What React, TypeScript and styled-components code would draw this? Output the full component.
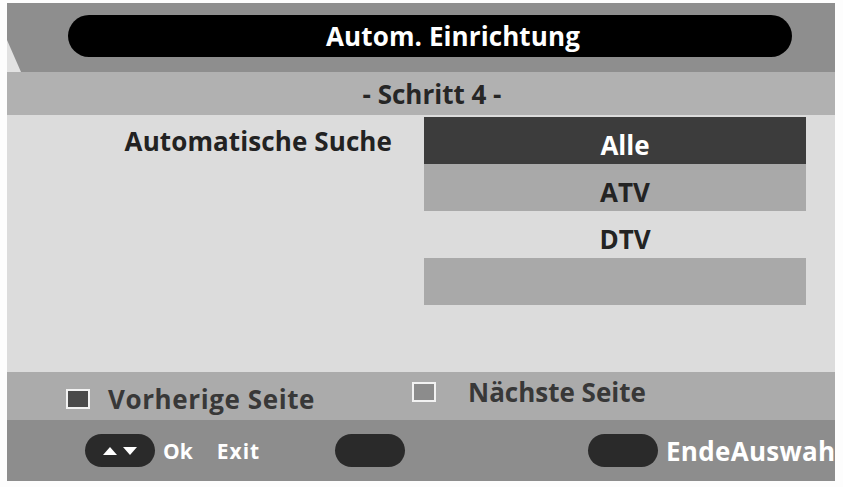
import React from "react";
import styled, { createGlobalStyle } from "styled-components";

const Global = createGlobalStyle`
  html, body { margin: 0; padding: 0; background: #ffffff; }
  body { font-family: "Open Sans", Lato, sans-serif; }
`;

const Screen = styled.div`
  width: 843px;
  height: 487px;
  box-sizing: border-box;
  padding: 3px 8px 6px 7px;
  background: #fdfdfd;
  overflow: hidden;
`;

const Frame = styled.div`
  display: flex;
  flex-direction: column;
  width: 828px;
  height: 478px;
  overflow: hidden;
`;

const TitleBar = styled.div`
  position: relative;
  height: 69px;
  box-sizing: border-box;
  padding: 12px 43px 15px 61px;
  background: #8e8e8e;
  &::before {
    content: "";
    position: absolute;
    left: 0;
    bottom: 0;
    width: 14px;
    height: 32px;
    background: #e2e2e2;
    clip-path: polygon(0 0, 100% 100%, 0 100%);
  }
`;

const TitlePill = styled.div`
  height: 42px;
  border-radius: 21px;
  background: #000000;
  display: flex;
  align-items: center;
  justify-content: center;
  padding-left: 46px;
  color: #ffffff;
  font-weight: 700;
  font-size: 26px;
  letter-spacing: 0.1px;
`;

const StepBar = styled.div`
  height: 43px;
  box-sizing: border-box;
  padding-left: 22px;
  background: #b1b1b1;
  display: flex;
  align-items: center;
  justify-content: center;
  color: #262626;
  font-weight: 700;
  font-size: 26px;
  letter-spacing: 0;
`;

const Content = styled.div`
  height: 257px;
  box-sizing: border-box;
  padding: 2px 29px 0 0;
  background: #dcdcdc;
  display: grid;
  grid-template-columns: 1fr 382px;
  column-gap: 32px;
  align-items: start;
`;

const Label = styled.div`
  height: 47px;
  display: flex;
  align-items: center;
  justify-content: flex-end;
  color: #222222;
  font-weight: 700;
  font-size: 26px;
  letter-spacing: 0.1px;
`;

const List = styled.div`
  display: flex;
  flex-direction: column;
`;

const Option = styled.div<{ $tone: "active" | "grey" | "plain" }>`
  height: 47px;
  box-sizing: border-box;
  padding: 8px 0 0 20px;
  display: flex;
  align-items: center;
  justify-content: center;
  font-weight: 700;
  font-size: 26px;
  letter-spacing: 0;
  background: ${(p) =>
    p.$tone === "active" ? "#3c3c3c" : p.$tone === "grey" ? "#a9a9a9" : "transparent"};
  color: ${(p) => (p.$tone === "active" ? "#ffffff" : "#232323")};
`;

const PageBar = styled.div`
  height: 48px;
  background: #ababab;
  display: flex;
  align-items: center;
  padding-left: 59px;
`;

const PageItem = styled.div<{ $width: number; $lift: number; $gap: number; $track: number }>`
  width: ${(p) => p.$width}px;
  display: flex;
  align-items: center;
  gap: ${(p) => p.$gap}px;
  transform: translateY(${(p) => -p.$lift}px);
  color: #383838;
  font-weight: 700;
  font-size: 26px;
  letter-spacing: ${(p) => p.$track}px;
  white-space: nowrap;
`;

const ColorKey = styled.span<{ $fill: string }>`
  width: 20px;
  height: 16px;
  box-sizing: content-box;
  border: 2px solid #f2f2f2;
  background: ${(p) => p.$fill};
  flex: none;
`;

const KeyBar = styled.div`
  height: 61px;
  background: #8d8d8d;
  display: flex;
  align-items: center;
  padding-left: 78px;
  color: #ffffff;
  overflow: hidden;
`;

const KeyGroup = styled.div<{ $width: number }>`
  width: ${(p) => p.$width}px;
  flex: none;
  display: flex;
  align-items: center;
`;

const KeyPill = styled.div<{ $after: number }>`
  width: 70px;
  height: 33px;
  border-radius: 17px;
  background: #2a2a2a;
  display: flex;
  align-items: center;
  justify-content: center;
  gap: 6px;
  margin-right: ${(p) => p.$after}px;
  flex: none;
`;

const KeyText = styled.span<{ $size: number; $after: number; $track: number }>`
  font-weight: 700;
  font-size: ${(p) => p.$size}px;
  margin-right: ${(p) => p.$after}px;
  white-space: nowrap;
  letter-spacing: ${(p) => p.$track}px;
  flex: none;
`;

const Arrow = ({ down }: { down?: boolean }) => (
  <svg width="14" height="8" viewBox="0 0 14 8">
    <polygon points={down ? "0,0 14,0 7,8" : "7,0 14,8 0,8"} fill="#ffffff" />
  </svg>
);

export default function App() {
  return (
    <>
      <Global />
      <Screen>
        <Frame>
          <TitleBar>
            <TitlePill>Autom. Einrichtung</TitlePill>
          </TitleBar>
          <StepBar>- Schritt 4 -</StepBar>
          <Content>
            <Label>Automatische Suche</Label>
            <List>
              <Option $tone="active">Alle</Option>
              <Option $tone="grey">ATV</Option>
              <Option $tone="plain">DTV</Option>
              <Option $tone="grey" />
            </List>
          </Content>
          <PageBar>
            <PageItem $width={346} $lift={-3} $gap={18} $track={0.6}>
              <ColorKey $fill="#4a4a4a" />
              Vorherige Seite
            </PageItem>
            <PageItem $width={300} $lift={4} $gap={32} $track={0}>
              <ColorKey $fill="#8c8c8c" />
              Nächste Seite
            </PageItem>
          </PageBar>
          <KeyBar>
            <KeyGroup $width={250}>
              <KeyPill $after={8}>
                <Arrow />
                <Arrow down />
              </KeyPill>
              <KeyText $size={21} $after={24} $track={0}>Ok</KeyText>
              <KeyText $size={21} $after={0} $track={1}>Exit</KeyText>
            </KeyGroup>
            <KeyGroup $width={253}>
              <KeyPill $after={0} />
            </KeyGroup>
            <KeyGroup $width={250}>
              <KeyPill $after={8} />
              <KeyText $size={26} $after={0} $track={0.3}>EndeAuswah</KeyText>
            </KeyGroup>
          </KeyBar>
        </Frame>
      </Screen>
    </>
  );
}
